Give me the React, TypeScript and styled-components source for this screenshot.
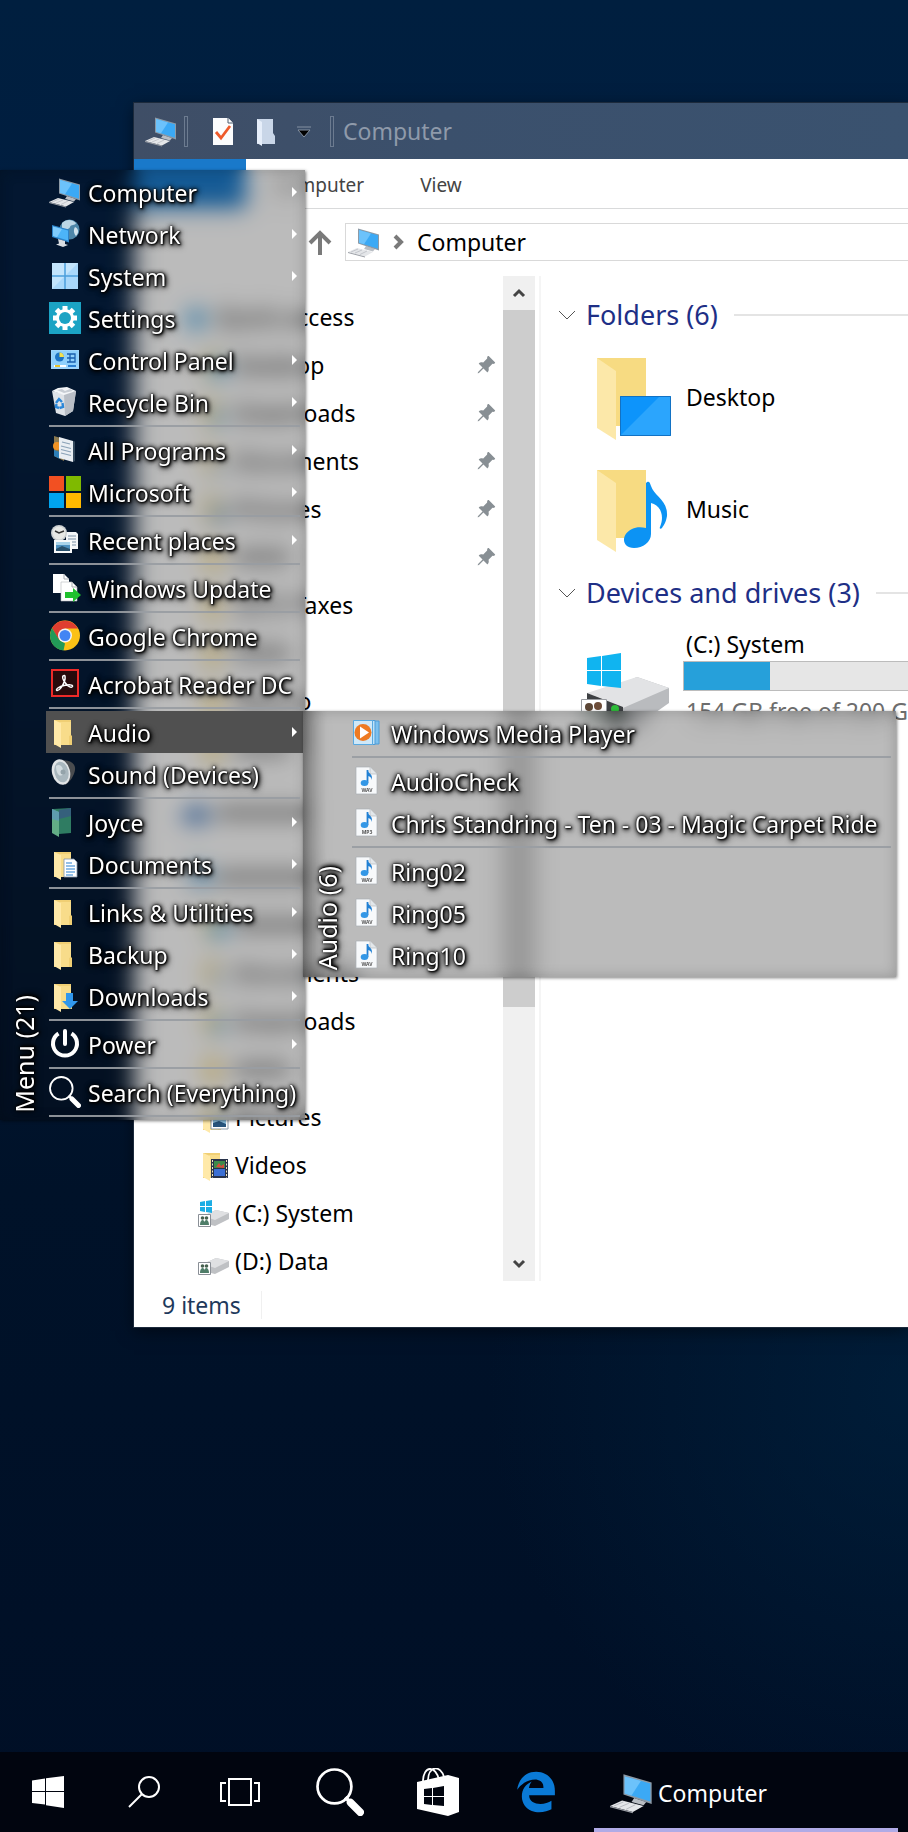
import React from "react";
import styled, { createGlobalStyle } from "styled-components";
import { FaEdgeLegacy } from "react-icons/fa6";
import { BsPinAngleFill } from "react-icons/bs";

const GlobalStyle = createGlobalStyle`
  *, *::before, *::after { box-sizing: border-box; }
  body {
    margin: 0;
    background: #00122a;
    font-family: "Noto Sans", "Open Sans", sans-serif;
    font-size: 23px;
    line-height: 32px;
    color: #000;
  }
  button, a { font: inherit; color: inherit; text-decoration: none; }
  button { border: 0; padding: 0; margin: 0; background: none; text-align: left; text-shadow: inherit; cursor: pointer; }
  ul { list-style: none; margin: 0; padding: 0; }
  h1, h2, p { margin: 0; font: inherit; }
  svg { display: block; flex: none; text-shadow: none; }
`;

/* ---------- Icons ---------- */

const PcIcon = ({ size = 32 }: { size?: number }) => (
  <svg width={size} height={size} viewBox="0 0 32 32">
    <path d="M18 20l9 3-2 2.500-9-2.500z" fill="#b9bec4" />
    <path d="M10 2.500l21 6v16l-21-7z" fill="#8d9aa6" />
    <path d="M11 4l19 5.300v13.400l-19-6z" fill="#3ba9f5" />
    <path d="M11 4l12 3.400-7 10.800-5-1.500z" fill="#6cc2fb" />
    <path d="M0 26l9-4 16 4-8 4.500z" fill="#e4e6e9" />
    <path d="M0 26l17 4.500v1L0 27z" fill="#9b9fa6" />
    <path d="M3 26l7-3M7 27l7-3M12 28.500l7-3.500" stroke="#b4b8be" strokeWidth="0.700" />
  </svg>
);

const NetworkIcon = () => (
  <svg width="32" height="32" viewBox="0 0 32 32">
    <circle cx="20.500" cy="11.500" r="10" fill="#4d86a8" />
    <path d="M13 5c4-4 10-4 14 0-1 3-5 1-6 4s-5 2-8 4z" fill="#bcd7e6" />
    <path d="M26 9c4 2 4 6 1 9-2-2-3-6-1-9z" fill="#cfe2ec" />
    <path d="M3 7l17 4.500v13L3 19z" fill="#2d83c8" />
    <path d="M4 8.500l15 4v10L4 18z" fill="#4cb4f8" />
    <path d="M4 8.500l9 2.400-5 8.300-4-1.200z" fill="#7fcbfc" />
    <path d="M9 21l7 2v3l3 1-5 2-7-2.500 3-1z" fill="#d9dde2" />
  </svg>
);

const TilesIcon = () => (
  <svg width="32" height="32" viewBox="0 0 32 32">
    <path d="M3 3h26v26H3z" fill="#a9d7fa" />
    <path d="M3 3h26L3 29z" fill="#c3e4fc" />
    <path d="M16 3v26M3 16h26" stroke="#4c9fdc" strokeWidth="1.500" />
  </svg>
);

const GearIcon = () => (
  <svg width="32" height="32" viewBox="0 0 32 32">
    <path d="M0 0h32v32H0z" fill="#1ba3c4" />
    {[0, 45, 90, 135].map((a) => (
      <rect key={a} x="13.500" y="4" width="5" height="24" fill="#fff" transform={`rotate(${a} 16 16)`} />
    ))}
    <circle cx="16" cy="16" r="9" fill="#fff" />
    <circle cx="16" cy="16" r="6" fill="#1ba3c4" />
  </svg>
);

const ControlPanelIcon = () => (
  <svg width="32" height="32" viewBox="0 0 32 32">
    <path d="M2 6h28v19H2z" fill="#9fd5fb" />
    <path d="M3 7h26v14H3z" fill="#8fd0fb" />
    <circle cx="10.500" cy="13" r="4.500" fill="#1d74c4" />
    <path d="M10.500 13V8.500a4.500 4.500 0 0 1 4.500 4.500z" fill="#f4e04c" />
    <path d="M18 10h8v8h-8M21 10v8M18 14h8" fill="none" stroke="#1a5fae" strokeWidth="1.300" />
    <path d="M5 22h12" stroke="#fff" strokeWidth="2" />
    <path d="M6 22h5" stroke="#e7c32c" strokeWidth="2" />
    <path d="M19 22h8" stroke="#2a7ed0" strokeWidth="2" />
  </svg>
);

const BinIcon = () => (
  <svg width="32" height="32" viewBox="0 0 32 32">
    <path d="M3 5l12 3 12-3-3 20-8 5-9-3z" fill="#dfe3e8" />
    <path d="M15 8l12-3-3 20-8 5z" fill="#b9bec6" />
    <path d="M3 5l6-3 9-1 9 4-12 4z" fill="#f4f6f8" />
    <path d="M8 4l5-1 3 2 5-2 3 2-9 2z" fill="#c8cdd4" />
    <path d="M7 17l3-4 3 3M13.500 17l.5 4-3.500 1M10 22l-3-1 .5-3" fill="none" stroke="#2a86d8" strokeWidth="2.400" />
  </svg>
);

const ProgramsIcon = () => (
  <svg width="32" height="32" viewBox="0 0 32 32">
    <path d="M5 2l10 3v22L5 22z" fill="#8c7a50" />
    <circle cx="8" cy="12" r="4" fill="#f09325" />
    <path d="M5 16l6 2v7l-6-3z" fill="#2d7fb8" />
    <path d="M10 3l14 4v21l-14-4z" fill="#e9eef3" />
    <path d="M13 8l8 2M12 12l10 2.500M12 15.500l10 2.500M12 19l10 2.500" stroke="#8ba3b8" strokeWidth="1.200" />
    <path d="M24 7l2 .5V27l-2 1z" fill="#34495c" />
  </svg>
);

const MicrosoftIcon = () => (
  <svg width="32" height="32" viewBox="0 0 32 32">
    <path d="M0 0h15v15H0z" fill="#f25022" />
    <path d="M17 0h15v15H17z" fill="#7fba00" />
    <path d="M0 17h15v15H0z" fill="#00a4ef" />
    <path d="M17 17h15v15H17z" fill="#ffb900" />
  </svg>
);

const RecentIcon = () => (
  <svg width="32" height="32" viewBox="0 0 32 32">
    <path d="M17 8h10l2 2v15H17z" fill="#f3f6f9" />
    <path d="M19 12h8M19 15h8M19 18h8M19 21h8" stroke="#7d92a8" strokeWidth="1.200" />
    <circle cx="10" cy="9" r="8" fill="#ccd0d2" />
    <circle cx="10" cy="9" r="6.500" fill="#e8e9e6" />
    <path d="M6 7l4 2 5-2" fill="none" stroke="#333" strokeWidth="1.400" />
    <path d="M5 16h18v13H5z" fill="#f8fafb" />
    <path d="M7 18h14v9H7z" fill="#4e91c0" />
    <path d="M7 18h14v3H7z" fill="#a9d3ea" />
    <path d="M7 25l6-3 8 3v2H7z" fill="#28506c" />
  </svg>
);

const UpdateIcon = () => (
  <svg width="32" height="32" viewBox="0 0 32 32">
    <path d="M4 2h11l5 5v14H4z" fill="#fff" />
    <path d="M15 2v5h5" fill="none" stroke="#a8acb0" />
    <path d="M12 10h11l5 5v14H12z" fill="#fff" stroke="#b7babd" strokeWidth="0.600" />
    <path d="M23 10v5h5" fill="none" stroke="#a8acb0" />
    <path d="M16 20h8v-4l8 7-8 7v-4h-8z" fill="#20c12e" />
  </svg>
);

const ChromeIcon = () => (
  <svg width="32" height="32" viewBox="0 0 32 32">
    <circle cx="16" cy="15.500" r="15" fill="#fbc116" />
    <path d="M3 8A15 15 0 0 1 29 8.500H16l-6.500 11z" fill="#df3e30" />
    <path d="M3 8l7 11.500 6 4-1.500 7A15 15 0 0 1 3 8z" fill="#229a57" />
    <circle cx="16" cy="15.500" r="7" fill="#f4f4f4" />
    <circle cx="16" cy="15.500" r="5.500" fill="#4285f4" />
  </svg>
);

const AcrobatIcon = () => (
  <svg width="32" height="32" viewBox="0 0 32 32">
    <path d="M3 2h26v26H3z" fill="#280a0b" stroke="#ee2a28" strokeWidth="2" />
    <path
      d="M14 8c2.500-2 2.500 2 1.500 5-1.500 4.500-5 10-7.500 9.500-2-1 2-4 7-5s9-1 8.500 1c-1 2-5-.5-7.500-4S13 9.500 14 8z"
      fill="none"
      stroke="#fff"
      strokeWidth="1.500"
    />
  </svg>
);

const FolderShape = () => (
  <>
    <path d="M5 4h17v15l1 1v9H5z" fill="#f0cf74" />
    <path d="M11 6h11v13l-2 1v9h-9z" fill="#f8dc8a" />
    <path d="M5 4l7 3v25l-7-4z" fill="#ffe9a8" />
  </>
);

const FolderIcon = () => (
  <svg width="32" height="32" viewBox="0 0 32 32">
    <FolderShape />
  </svg>
);

const DocumentsIcon = () => (
  <svg width="32" height="32" viewBox="0 0 32 32">
    <FolderShape />
    <path d="M15 11h10l3 3v15H15z" fill="#fff" stroke="#8496aa" strokeWidth="0.800" />
    <path d="M17 15h6M17 18h9M17 21h9M17 24h9M17 27h7" stroke="#2a80d0" strokeWidth="1.200" />
  </svg>
);

const DownloadsIcon = () => (
  <svg width="32" height="32" viewBox="0 0 32 32">
    <FolderShape />
    <path d="M17 13h7v8h5l-8 8-8-8h4z" fill="#3197ec" />
  </svg>
);

const DesktopFolderIcon = () => (
  <svg width="32" height="32" viewBox="0 0 32 32">
    <FolderShape />
    <path d="M13 15h16v11H13z" fill="#1296f5" />
  </svg>
);

const PicturesIcon = () => (
  <svg width="32" height="32" viewBox="0 0 32 32">
    <FolderShape />
    <path d="M13 13h17v15H13z" fill="#fff" stroke="#8a9aa8" />
    <path d="M15 15h13v11H15z" fill="#8fc4e4" />
    <path d="M15 22l6-2 7 3v3H15z" fill="#27547c" />
  </svg>
);

const VideosIcon = () => (
  <svg width="32" height="32" viewBox="0 0 32 32">
    <FolderShape />
    <path d="M13 10h17v19H13z" fill="#28324a" />
    <path d="M16 12h11v7H16z" fill="#3d8a4a" />
    <path d="M16 20h11v7H16z" fill="#3b6fd4" />
    <path d="M18 18l3-4 2 3 3-2v4z" fill="#d84a3a" />
    <path d="M14.500 11v18M28.500 11v18" stroke="#f3e9c0" strokeDasharray="2 1.500" />
  </svg>
);

const DriveIcon = ({ system }: { system?: boolean }) => (
  <svg width="32" height="32" viewBox="0 0 32 32">
    <path d="M5 19l13-6 13 3v6l-14 7-12-3z" fill="#bfc1c4" />
    <path d="M5 19l13-6 13 3-14 7z" fill="#dfe0e2" />
    {system && <path d="M2 5l5-1v5H2zM8 4l6-1v6H8zM2 10h5v5l-5-1zM8 10h6v6l-6-1z" fill="#1cade4" />}
    <path d="M.5 17.500h12v12H.5z" fill="#fff" stroke="#8a8f96" />
    <circle cx="4.500" cy="21" r="1.800" fill="#47614f" />
    <circle cx="8.500" cy="21" r="1.800" fill="#47614f" />
    <path d="M2 28c0-6 4-6 4.500-3 .5-3 4.500-3 4.500 3z" fill="#4f7d68" />
  </svg>
);

const StarIcon = () => (
  <svg width="32" height="32" viewBox="0 0 32 32">
    <path d="M16 3l4 9 10 1-7 7 2 10-9-5-9 5 2-10-7-7 10-1z" fill="#3ea2e0" />
  </svg>
);

const CloudIcon = () => (
  <svg width="32" height="32" viewBox="0 0 32 32">
    <path d="M2 22c0-6 4-7 7-7 2-8 14-8 15 0 5 0 6 3 6 6s-2 4-4 4H5c-2 0-3-1-3-3z" fill="#1c5fb4" />
  </svg>
);

const SpeakerIcon = () => (
  <svg width="32" height="32" viewBox="0 0 32 32">
    <path d="M12 2c10 0 15 4 14 10s-5 12-10 15z" fill="#4a4c4f" />
    <ellipse cx="12" cy="14" rx="9" ry="13" fill="#e2e5e7" transform="rotate(-14 12 14)" />
    <ellipse cx="12.500" cy="14" rx="7" ry="10.500" fill="#a9b7be" transform="rotate(-14 12.500 14)" />
    <path d="M7 8c4-3 8 1 7 8-3 4-7 0-7-8z" fill="#d3dce0" />
    <circle cx="14" cy="14" r="2.500" fill="#94a3aa" />
  </svg>
);

const UserFolderIcon = () => (
  <svg width="32" height="32" viewBox="0 0 32 32">
    <path d="M4 3l18-1v25l-12 1z" fill="#2f7c62" />
    <path d="M10 4l12-2v8l-12 3z" fill="#35607c" />
    <path d="M3 3l7 3v25l-7-4z" fill="#63ad86" />
    <path d="M3 3l7 3v9l-7-2z" fill="#5f9cae" />
  </svg>
);

const PowerIcon = () => (
  <svg width="32" height="32" viewBox="0 0 32 32">
    <path d="M9.500 5.500a12 12 0 1 0 13 0" fill="none" stroke="#fff" strokeWidth="4" />
    <path d="M16 3v13" stroke="#fff" strokeWidth="4" strokeLinecap="round" />
  </svg>
);

const LensIcon = ({ size = 32 }: { size?: number }) => (
  <svg width={size} height={size} viewBox="0 0 32 32">
    <circle cx="12.300" cy="12.300" r="11.300" fill="none" stroke="#fff" strokeWidth="1.800" />
    <path d="M19.500 19.500l4 4" stroke="#fff" strokeWidth="2.500" />
    <path d="M23 23l6.500 6.500" stroke="#fff" strokeWidth="5" strokeLinecap="round" />
  </svg>
);

const PlayerIcon = () => (
  <svg width="32" height="32" viewBox="0 0 32 32">
    <path d="M9 4h18v23H9z" fill="#7cc0ee" stroke="#4c9cd8" />
    <path d="M5 3.500h18v24H5z" fill="#bfe2f8" stroke="#4c9cd8" />
    <path d="M1.500 3.500h19v24h-19z" fill="#cfe8f8" stroke="#5aa9e0" />
    <circle cx="11" cy="15.500" r="8.500" fill="#ee7a22" />
    <path d="M8 9.500l9 6-9 6z" fill="#fff" />
  </svg>
);

const AudioFileIcon = ({ label }: { label: string }) => (
  <svg width="32" height="32" viewBox="0 0 32 32">
    <path d="M4 2h14l7 7v20H4z" fill="#f7f9fb" stroke="#a9b0b6" strokeWidth="0.700" />
    <path d="M18 2v7h7" fill="#e3e7ea" stroke="#b4babf" strokeWidth="0.700" />
    <path d="M15.500 5v13" stroke="#2180d4" strokeWidth="1.800" />
    <path d="M15.500 5c1 4 6 4 4 10 0-3-2-4-4-4z" fill="#2180d4" />
    <ellipse cx="12.500" cy="18" rx="3.800" ry="3" fill="#3397e6" />
    <text x="15" y="27" fontSize="5" fontWeight="700" textAnchor="middle" fill="#555">
      {label}
    </text>
  </svg>
);

const BigFolderShape = () => (
  <>
    <path d="M16 0h49v68H16z" fill="#f4d36f" />
    <path d="M16 0h49v68H34z" fill="#f7db82" />
    <path d="M16 0l19 13v69l-19-12z" fill="#fce8a9" />
  </>
);

const BigDesktopIcon = () => (
  <svg width="96" height="86" viewBox="0 -4 96 86">
    <BigFolderShape />
    <path d="M39 38h51v40H39z" fill="#0d94fb" />
    <path d="M39 78l40-40h11v40z" fill="#2ba5fd" />
    <path d="M39.500 38.500h50v39h-50z" fill="none" stroke="#1272c4" />
  </svg>
);

const BigMusicIcon = () => (
  <svg width="96" height="86" viewBox="0 -4 96 86">
    <BigFolderShape />
    <path
      d="M65 13c3-3 4 0 5 3 3 10 17 14 16 30-1 6-3 9-5 12-1 1-3 1-2-1 5-12 0-22-9-24v31c0 8-8 14-17 14-13 0-13-14-2-19 4-2 9-2 14-1z"
      fill="#0c93f4"
    />
  </svg>
);

const BigDriveIcon = () => (
  <svg width="96" height="112" viewBox="0 -34 96 112">
    <path d="M6 46l50-22 32 11v15L48 78 6 66z" fill="#b9bbbe" />
    <path d="M6 40l50-16 32 11-46 20z" fill="#e2e3e5" />
    <path d="M6 40l36 14v24L6 66z" fill="#3d4043" />
    <circle cx="34" cy="56" r="4" fill="#2ebd3a" />
    <path d="M6 5l14-2v14H6zM21 3l19-3v17H21zM6 18h14v15L6 31zM21 18h19v17l-19-2z" fill="#10b4f0" />
    <path d="M.5 46.500h25v30H.5z" fill="#fff" stroke="#9a9da2" />
    <circle cx="8" cy="54" r="4" fill="#5b4636" />
    <circle cx="17" cy="53" r="4" fill="#6d4c38" />
    <path d="M3 66c0-8 8-9 9-4 2-6 10-5 10 4z" fill="#6b7f74" />
  </svg>
);

const CheckDocIcon = () => (
  <svg width="32" height="32" viewBox="0 0 32 32">
    <path d="M6 3h15l5 5v22H6z" fill="#fbfcfd" />
    <path d="M21 3v5h5" fill="#fbfcfd" stroke="#4b5c70" />
    <path d="M9 17l5 6 9-12" fill="none" stroke="#ee5a2b" strokeWidth="2.800" />
  </svg>
);

const PaleFolderIcon = () => (
  <svg width="32" height="32" viewBox="0 0 32 32">
    <path d="M7 4h16v14l2 3v8H7z" fill="#c9d6e8" />
    <path d="M7 4l5 3v24l-5-3z" fill="#e6eefa" />
  </svg>
);

const Chevron = ({ d, width = 2, color = "#444" }: { d: string; width?: number; color?: string }) => (
  <svg width="16" height="16" viewBox="0 0 16 16">
    <path d={d} fill="none" stroke={color} strokeWidth={width} />
  </svg>
);

/* ---------- Desktop and window ---------- */

const Desktop = styled.div`
  position: relative;
  display: flex;
  flex-direction: column;
  min-height: 100vh;
  overflow: hidden;
  background:
    radial-gradient(ellipse 420px 420px at 100% 76%, rgba(0, 40, 72, 0.5), transparent),
    linear-gradient(180deg, #001f3f 0%, #001d40 15%, #001229 65%, #000f26 100%);
`;

const Workspace = styled.main`
  flex: 1;
  padding: 103px 0 80px 134px;
`;

const Window = styled.section`
  background: #fff;
  box-shadow: 0 0 0 1px #1c2a3c, 0 4px 16px rgba(0, 0, 0, 0.5);
`;

const TitleBar = styled.header`
  display: flex;
  align-items: center;
  height: 56px;
  padding-left: 11px;
  background: linear-gradient(90deg, #3f4e66, #3b506c 40%, #3a526f);
  color: #8f9aaa;
`;

const TitleRule = styled.span`
  width: 4px;
  height: 31px;
  border: 1px solid #6c7b90;
`;

const QuickTools = styled.div`
  display: flex;
  align-items: center;
  gap: 11px;
  margin-left: 7px;
`;

const IconButton = styled.button`
  display: grid;
  place-items: center;
`;

const ToolList = styled.div`
  display: flex;
  align-items: center;
  gap: 11px;
  padding: 0 4px 0 8px;
`;

const WindowTitle = styled.h1`
  padding-left: 9px;
`;

const Tabs = styled.nav`
  display: flex;
  height: 50px;
  border-bottom: 1px solid #d9dadb;
  font-size: 19px;
`;

const Tab = styled.button<{ $active?: boolean }>`
  padding: 2px 28px 0;
  color: #444;
  background: ${(p) => (p.$active ? "#1979ca" : "transparent")};
  min-width: ${(p) => (p.$active ? "112px" : "0")};
  text-align: center;
`;

const AddressRow = styled.div`
  display: flex;
  align-items: center;
  gap: 13px;
  padding: 14px 0 15px 174px;
`;

const AddressBox = styled.div`
  flex: 1;
  display: flex;
  align-items: center;
  gap: 10px;
  height: 38px;
  padding-left: 2px;
  border: 1px solid #d9d9d9;
  border-right: 0;
`;

const Crumb = styled.a`
  padding-left: 1px;
  line-height: 36px;
`;

const Panes = styled.div`
  display: flex;
`;

const NavList = styled.ul`
  flex: none;
  width: 369px;
  padding-top: 17px;
  margin-bottom: -4px;
`;

const NavRow = styled.li<{ $parent?: boolean; $spaced?: boolean }>`
  margin-top: ${(p) => (p.$spaced ? "16px" : "0")};
  padding: 0 7px 0 ${(p) => (p.$parent ? "46px" : "64px")};
  display: flex;
  align-items: center;
  justify-content: space-between;
  height: 48px;
  color: #888f94;
`;

const NavLink = styled.a`
  display: flex;
  align-items: center;
  gap: 5px;
  color: #000;
`;

/* A label that lies wholly behind the frosted menu shows only as a smear. */
const Smear = styled.span<{ $length: number }>`
  width: ${(p) => p.$length}px;
  height: 12px;
  background: #8c8c8c;
`;

const ScrollBar = styled.div`
  flex: none;
  display: flex;
  flex-direction: column;
  width: 32px;
  background: #f0f0f0;
`;

const ScrollButton = styled(IconButton)`
  height: 34px;
`;

const ScrollThumb = styled.div`
  flex: 697;
  background: #cdcdcd;
`;

const ScrollRest = styled.div`
  flex: 240;
`;

const Content = styled.div`
  flex: 1;
  min-width: 0;
  margin-left: 4px;
  border-left: 2px solid #f5f5f5;
  padding: 11px 0 0 18px;
  overflow: hidden;
`;

const GroupHead = styled.h2`
  display: flex;
  align-items: center;
  gap: 11px;
  height: 54px;
  padding-top: 1px;
  font-size: 27px;
  color: #1e2f86;
  white-space: nowrap;

  &::after {
    content: "";
    flex: 1;
    height: 2px;
    margin-left: 5px;
    background: #e4e4e4;
  }
`;

const Tile = styled.a`
  display: flex;
  align-items: center;
  gap: 6px;
  height: 112px;
  padding-left: 22px;
`;

const TileText = styled.span`
  display: block;
  padding-left: 3px;
  line-height: 30px;
`;

const Drive = styled.span`
  flex: 1;
  min-width: 378px;
  padding-top: 4px;
  line-height: 30px;
`;

const Muted = styled(TileText)`
  color: #6d6d6d;
`;

const Meter = styled.span`
  display: block;
  height: 30px;
  margin: 2px 0 5px;
  border: 1px solid #bcbcbc;
  background: #e6e6e6;
`;

const MeterFill = styled.span`
  display: block;
  width: 23%;
  height: 100%;
  background: #26a0da;
`;

const StatusBar = styled.footer`
  display: flex;
  align-items: center;
  height: 46px;
  padding: 2px 0 0 28px;
  color: #1e395b;
`;

const StatusText = styled.span`
  padding-right: 20px;
  border-right: 1px solid #f0f0f0;
  line-height: 28px;
`;

/* ---------- Pop-up menus ---------- */

const MenuPanel = styled.div<{ $sub?: boolean }>`
  position: absolute;
  z-index: 1;
  top: ${(p) => (p.$sub ? "711px" : "170px")};
  left: ${(p) => (p.$sub ? "303px" : "0")};
  width: ${(p) => (p.$sub ? "593px" : "305px")};
  display: flex;
  padding: 1px 2px 1px 0;
  color: #fff;
  text-shadow: 0 0 2px #000, 1px 1px 2px #000, 1px 1px 4px #000, 0 0 5px #000, 1px 2px 7px #000;
`;

const Frost = styled.span`
  position: absolute;
  inset: 0;
  z-index: -1;
  backdrop-filter: blur(6px);
`;

const Tint = styled.span<{ $sub?: boolean }>`
  position: absolute;
  inset: 0;
  z-index: -1;
  background: ${(p) =>
    p.$sub
      ? "linear-gradient(90deg, rgba(0, 0, 0, 0.2), transparent 24px), rgba(10, 10, 10, 0.28)"
      : "rgba(10, 10, 10, 0.28)"};
  box-shadow: inset 0 0 14px rgba(0, 0, 0, 0.2), 1px 1px 3px rgba(0, 0, 0, 0.5);
`;

const MenuTitle = styled.h2`
  flex: none;
  align-self: flex-end;
  width: 46px;
  padding: 6px 3px 0 0;
  writing-mode: vertical-rl;
  transform: rotate(180deg);
  font-size: 25px;
  line-height: 42px;
`;

const MenuList = styled.ul`
  flex: 1;
`;

const MenuEntry = styled.li<{ $ruled?: boolean }>`
  ${(p) =>
    p.$ruled &&
    `
    &::after {
      content: "";
      display: block;
      height: 2px;
      margin: 2px 3px;
      background: rgba(152, 156, 162, 0.92);
    }
  `}
`;

const MenuButton = styled.button<{ $open?: boolean }>`
  display: flex;
  align-items: center;
  gap: 7px;
  width: 100%;
  height: 42px;
  padding: 0 6px 0 3px;
  background: ${(p) => (p.$open ? "#505050" : "transparent")};
  white-space: nowrap;
`;

const MenuLabel = styled.span`
  flex: 1;
  min-width: 0;
  padding-top: 2px;
`;

const MenuArrow = styled.span`
  margin-left: -20px;
  border: 5px solid transparent;
  border-left-color: #fff;
  border-right-width: 0;
`;

/* ---------- Taskbar ---------- */

const Taskbar = styled.footer`
  display: flex;
  height: 80px;
  background: #01050f;
  color: #fff;
`;

const TaskButton = styled.button<{ $wide?: boolean }>`
  display: grid;
  place-items: center;
  width: ${(p) => (p.$wide ? "98px" : "96px")};
`;

const Pinned = styled.div`
  display: flex;
  padding: 0 9px 0 3px;
`;

const TaskWindow = styled.button`
  display: flex;
  align-items: center;
  gap: 5px;
  width: 304px;
  padding: 4px 0 0 16px;
  border-bottom: 4px solid #b0abe6;
`;

const TaskLabel = styled.span`
  padding-top: 2px;
`;

/* ---------- Data ---------- */

type MenuItem = { label: string; icon: React.ReactNode; arrow?: boolean; ruled?: boolean; open?: boolean };

const mainMenu: MenuItem[] = [
  { label: "Computer", icon: <PcIcon />, arrow: true },
  { label: "Network", icon: <NetworkIcon />, arrow: true },
  { label: "System", icon: <TilesIcon />, arrow: true },
  { label: "Settings", icon: <GearIcon /> },
  { label: "Control Panel", icon: <ControlPanelIcon />, arrow: true },
  { label: "Recycle Bin", icon: <BinIcon />, arrow: true, ruled: true },
  { label: "All Programs", icon: <ProgramsIcon />, arrow: true },
  { label: "Microsoft", icon: <MicrosoftIcon />, arrow: true, ruled: true },
  { label: "Recent places", icon: <RecentIcon />, arrow: true, ruled: true },
  { label: "Windows Update", icon: <UpdateIcon />, ruled: true },
  { label: "Google Chrome", icon: <ChromeIcon />, ruled: true },
  { label: "Acrobat Reader DC", icon: <AcrobatIcon />, ruled: true },
  { label: "Audio", icon: <FolderIcon />, arrow: true, open: true },
  { label: "Sound (Devices)", icon: <SpeakerIcon />, ruled: true },
  { label: "Joyce", icon: <UserFolderIcon />, arrow: true },
  { label: "Documents", icon: <DocumentsIcon />, arrow: true, ruled: true },
  { label: "Links & Utilities", icon: <FolderIcon />, arrow: true },
  { label: "Backup", icon: <FolderIcon />, arrow: true },
  { label: "Downloads", icon: <DownloadsIcon />, arrow: true, ruled: true },
  { label: "Power", icon: <PowerIcon />, arrow: true, ruled: true },
  { label: "Search (Everything)", icon: <LensIcon />, ruled: true },
];

const audioMenu: MenuItem[] = [
  { label: "Windows Media Player", icon: <PlayerIcon />, ruled: true },
  { label: "AudioCheck", icon: <AudioFileIcon label="WAV" /> },
  { label: "Chris Standring - Ten - 03 - Magic Carpet Ride", icon: <AudioFileIcon label="MP3" />, ruled: true },
  { label: "Ring02", icon: <AudioFileIcon label="WAV" /> },
  { label: "Ring05", icon: <AudioFileIcon label="WAV" /> },
  { label: "Ring10", icon: <AudioFileIcon label="WAV" /> },
];

type NavItem = {
  label: React.ReactNode;
  icon: React.ReactNode;
  pinned?: boolean;
  parent?: boolean;
  spaced?: boolean;
};

const navItems: NavItem[] = [
  { label: "Quick access", icon: <StarIcon />, parent: true },
  { label: "Desktop", icon: <DesktopFolderIcon />, pinned: true },
  { label: "Downloads", icon: <DownloadsIcon />, pinned: true },
  { label: "Documents", icon: <DocumentsIcon />, pinned: true },
  { label: "Pictures", icon: <PicturesIcon />, pinned: true },
  { label: <Smear $length={54} />, icon: <FolderIcon />, pinned: true },
  { label: "2015 Taxes", icon: <FolderIcon /> },
  { label: <Smear $length={54} />, icon: <FolderIcon /> },
  { label: "Mexico", icon: <FolderIcon /> },
  { label: <Smear $length={54} />, icon: <FolderIcon /> },
  { label: <Smear $length={90} />, icon: <CloudIcon />, parent: true, spaced: true },
  { label: <Smear $length={96} />, icon: <PcIcon />, parent: true, spaced: true },
  { label: <Smear $length={80} />, icon: <DesktopFolderIcon /> },
  { label: "Documents", icon: <DocumentsIcon /> },
  { label: "Downloads", icon: <DownloadsIcon /> },
  { label: <Smear $length={54} />, icon: <FolderIcon /> },
  { label: "Pictures", icon: <PicturesIcon /> },
  { label: "Videos", icon: <VideosIcon /> },
  { label: "(C:) System", icon: <DriveIcon system /> },
  { label: "(D:) Data", icon: <DriveIcon /> },
];

const PopupMenu = ({ title, items, sub }: { title: string; items: MenuItem[]; sub?: boolean }) => (
  <MenuPanel $sub={sub}>
    <Frost />
    <Frost />
    <Frost />
    <Frost />
    <Tint $sub={sub} />
    <MenuTitle>{title}</MenuTitle>
    <MenuList>
      {items.map((item) => (
        <MenuEntry key={item.label} $ruled={item.ruled}>
          <MenuButton $open={item.open}>
            {item.icon}
            <MenuLabel>{item.label}</MenuLabel>
            {item.arrow && <MenuArrow />}
          </MenuButton>
        </MenuEntry>
      ))}
    </MenuList>
  </MenuPanel>
);

export default function App() {
  return (
    <Desktop>
      <GlobalStyle />
      <Workspace>
        <Window>
          <TitleBar>
            <PcIcon />
            <QuickTools>
              <TitleRule />
              <ToolList>
                <IconButton aria-label="Properties"><CheckDocIcon /></IconButton>
                <IconButton aria-label="New folder"><PaleFolderIcon /></IconButton>
                <IconButton aria-label="Customize toolbar">
                  <svg width="22" height="32" viewBox="0 0 22 32">
                    <path d="M4 12h14M5 15h12l-6 7z" fill="#000" stroke="#8592a3" strokeWidth="1" />
                  </svg>
                </IconButton>
              </ToolList>
              <TitleRule />
            </QuickTools>
            <WindowTitle>Computer</WindowTitle>
          </TitleBar>
          <Tabs>
            <Tab $active aria-label="File" />
            <Tab>Computer</Tab>
            <Tab>View</Tab>
          </Tabs>
          <AddressRow>
            <IconButton aria-label="Up">
              <svg width="24" height="26" viewBox="0 0 24 26">
                <path d="M12 26V4M2 14L12 4l10 10" fill="none" stroke="#7a7a7a" strokeWidth="4" />
              </svg>
            </IconButton>
            <AddressBox>
              <PcIcon />
              <Chevron d="M5 2l6 6-6 6" width={4} color="#7a7a7a" />
              <Crumb href="#computer">Computer</Crumb>
            </AddressBox>
          </AddressRow>
          <Panes>
            <NavList>
              {navItems.map((item, i) => (
                <NavRow key={i} $parent={item.parent} $spaced={item.spaced}>
                  <NavLink href="#item">
                    {item.icon}
                    {item.label}
                  </NavLink>
                  {item.pinned && <BsPinAngleFill size={20} />}
                </NavRow>
              ))}
            </NavList>
            <ScrollBar>
              <ScrollButton aria-label="Scroll up"><Chevron d="M3 11l5-5 5 5" width={3} /></ScrollButton>
              <ScrollThumb />
              <ScrollRest />
              <ScrollButton aria-label="Scroll down"><Chevron d="M3 5l5 5 5-5" width={3} /></ScrollButton>
            </ScrollBar>
            <Content>
              <GroupHead><Chevron d="M0 4l8 8 8-8" width={1} color="#555" />Folders (6)</GroupHead>
              <Tile href="#desktop"><BigDesktopIcon /><TileText>Desktop</TileText></Tile>
              <Tile href="#music"><BigMusicIcon /><TileText>Music</TileText></Tile>
              <GroupHead><Chevron d="M0 4l8 8 8-8" width={1} color="#555" />Devices and drives (3)</GroupHead>
              <Tile href="#system">
                <BigDriveIcon />
                <Drive>
                  <TileText>(C:) System</TileText>
                  <Meter><MeterFill /></Meter>
                  <Muted>154 GB free of 200 GB</Muted>
                </Drive>
              </Tile>
            </Content>
          </Panes>
          <StatusBar><StatusText>9 items</StatusText></StatusBar>
        </Window>
      </Workspace>
      <Taskbar>
        <TaskButton aria-label="Start">
          <svg width="32" height="32" viewBox="0 0 32 32">
            <path d="M0 4.500L13 2.500V15H0zM14 2.300L32 0v15H14zM0 16h13v12.500L0 27zM14 16h18v16l-18-2.700z" fill="#fff" />
          </svg>
        </TaskButton>
        <TaskButton aria-label="Search">
          <svg width="32" height="32" viewBox="0 0 32 32">
            <circle cx="21" cy="11" r="10" fill="none" stroke="#fff" strokeWidth="2" />
            <path d="M14 18L1 31" stroke="#fff" strokeWidth="2" />
          </svg>
        </TaskButton>
        <TaskButton aria-label="Task view">
          <svg width="40" height="28" viewBox="0 0 40 28">
            <path d="M9 1h22v26H9zM6 5H1v18h5M34 5h5v18h-5" fill="none" stroke="#fff" strokeWidth="2" />
          </svg>
        </TaskButton>
        <Pinned>
          <TaskButton $wide aria-label="Everything"><LensIcon size={48} /></TaskButton>
          <TaskButton $wide aria-label="Store">
            <svg width="44" height="48" viewBox="0 0 44 48">
              <path d="M7 14C7-3 20-3 23 12M12 13C12-3 25-3 28 9" fill="none" stroke="#fff" strokeWidth="1.800" />
              <path d="M1 14l31-7 11 3v34l-11 4-31-7z" fill="#fff" />
              <path d="M8 21l8-1v8H8zM17 20l11-2v10H17zM8 29h8v8l-8-1zM17 29h11v9l-11-1z" fill="#01050f" />
            </svg>
          </TaskButton>
          <TaskButton $wide aria-label="Edge"><FaEdgeLegacy size={42} color="#0a7ad6" /></TaskButton>
        </Pinned>
        <TaskWindow>
          <PcIcon size={43} />
          <TaskLabel>Computer</TaskLabel>
        </TaskWindow>
      </Taskbar>
      <PopupMenu title="Menu (21)" items={mainMenu} />
      <PopupMenu title="Audio (6)" items={audioMenu} sub />
    </Desktop>
  );
}
